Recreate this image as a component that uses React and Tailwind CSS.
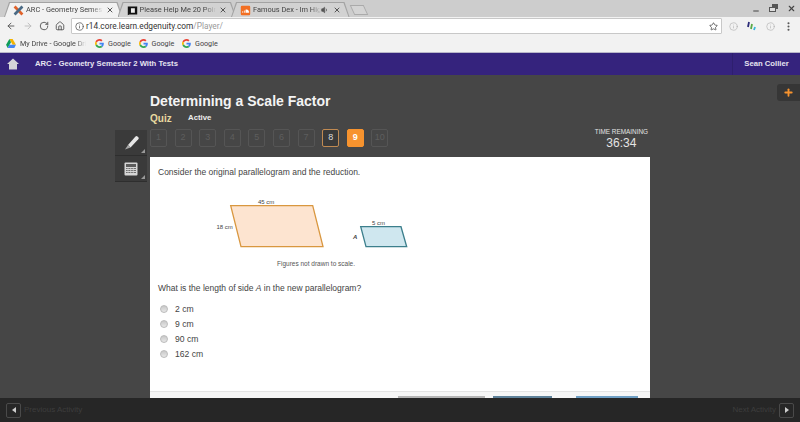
import { ArrowLeft, ArrowRight, RotateCw, Home, Info, Star, X, Minus, EllipsisVertical, Plus, Volume1 } from 'lucide-react';

const sans = { fontFamily: '"Liberation Sans", Arial, sans-serif' };
const chromeFont = { fontFamily: 'Roboto, "Liberation Sans", sans-serif' };

function GoogleG() {
  return (
    <svg width="9" height="9" viewBox="0 0 48 48" className="shrink-0">
      <path fill="#ea4335" d="M24 9.500c3.500 0 6.700 1.200 9.200 3.600l6.800-6.800C35.900 2.400 30.500 0 24 0 14.600 0 6.500 5.400 2.600 13.200l7.900 6.200C12.400 13.700 17.700 9.500 24 9.500z" />
      <path fill="#4285f4" d="M47 24.500c0-1.600-.1-3.100-.4-4.500H24v9h13c-.6 3-2.200 5.500-4.800 7.200l7.700 6C44.400 38 47 31.800 47 24.500z" />
      <path fill="#fbbc05" d="M10.500 28.600c-.5-1.400-.8-3-.8-4.600s.3-3.200.8-4.600l-7.900-6.200C.9 16.500 0 20.100 0 24s.9 7.500 2.600 10.800l7.900-6.200z" />
      <path fill="#34a853" d="M24 48c6.500 0 11.900-2.100 15.900-5.800l-7.700-6c-2.100 1.400-4.900 2.300-8.200 2.300-6.300 0-11.600-4.200-13.500-9.900l-7.900 6.200C6.500 42.600 14.600 48 24 48z" />
    </svg>
  );
}

function TabIcon({ kind }) {
  if (kind === 'x') {
    return (
      <svg width="11" height="11" viewBox="0 0 14 14" className="shrink-0">
        <path d="M2 2l10 10" stroke="#e0622a" strokeWidth="3.500" />
        <path d="M12 2L2 12" stroke="#4a6a85" strokeWidth="3.500" />
      </svg>
    );
  }
  if (kind === 'book') {
    return (
      <svg width="11" height="11" viewBox="0 0 14 14" className="shrink-0">
        <path d="M1 2h12v10H3l-2 1z" fill="#111" />
        <path d="M5 4h5v6H5z" fill="#eee" />
      </svg>
    );
  }
  return (
    <svg width="11" height="11" viewBox="0 0 14 14" className="shrink-0">
      <rect x="1" y="1" width="12" height="12" rx="1.500" fill="#f26f23" />
      <path d="M3 10V8h1v2zm2 0V7h1v3zm2 0V6c2-1 4 0 4 2 1 0 1 2 0 2z" fill="#fff" />
    </svg>
  );
}

function Tab({ icon, title, active, audio }) {
  return (
    <div className="-mr-[5px] h-[15px] w-[118.500px] shrink-0 bg-[#a3a3a3] pl-[1px] pr-[1px] pt-[1px] [clip-path:polygon(0_100%,5px_0,calc(100%-5px)_0,100%_100%)]">
      <div
        className={`flex h-full items-center pl-[8px] pr-[8px] [clip-path:polygon(0_100%,5px_0,calc(100%-5px)_0,100%_100%)] ${
          active ? 'bg-[#f2f2f2]' : 'bg-[#d2d2d2]'
        }`}
      >
        <TabIcon kind={icon} />
        <span className="ml-[2px] min-w-0 flex-1 whitespace-nowrap text-[7.400px] leading-[12px] text-[#444] [mask-image:linear-gradient(to_right,black_85%,transparent)]">
          {title}
        </span>
        {audio && <Volume1 size={8} strokeWidth={2} fill="#555" className="mr-[1px] shrink-0 text-[#555]" />}
        <X size={8} strokeWidth={3} className="ml-[3px] shrink-0 text-[#555]" />
      </div>
    </div>
  );
}

function Bookmark({ label }) {
  return (
    <div className="flex w-[43.500px] shrink-0 items-center gap-[4px]">
      <GoogleG />
      <span className="whitespace-nowrap text-[7.200px] leading-[12px] text-[#444]">{label}</span>
    </div>
  );
}

function BrowserChrome() {
  return (
    <div className="shrink-0" style={chromeFont}>
      <div className="flex h-[17px] items-end justify-between bg-[#cdcdcd] pl-[4px]">
        <div className="flex items-end">
          <Tab icon="x" title="ARC - Geometry Semeste" active />
          <Tab icon="book" title="Please Help Me 20 Point" />
          <Tab icon="cloud" title="Famous Dex - Im High" audio />
          <div className="ml-[7px] mb-[2px] h-[10px] w-[14px] skew-x-[25deg] border border-[#aaa] bg-[#d4d4d4]" />
        </div>
        <div className="flex items-center gap-[9px] self-center pr-[4px] text-[#444]">
          <Minus size={8} strokeWidth={3} className="mt-[4px]" />
          <svg width="9" height="9" viewBox="0 0 9 9">
            <path d="M3 0h6v5H7V8H0V3h3z" fill="#555" />
            <path d="M1 4h5v3H1z" fill="#ddd" />
          </svg>
          <X size={9} strokeWidth={3} />
        </div>
      </div>
      <div className="flex h-[18px] items-center bg-[#f2f2f2] pl-[6px] pr-[6px]">
        <ArrowLeft size={10} strokeWidth={2.200} className="shrink-0 text-[#555]" />
        <ArrowRight size={10} strokeWidth={2.200} className="ml-[7px] shrink-0 text-[#bbb]" />
        <RotateCw size={10} strokeWidth={2.200} className="ml-[6px] shrink-0 text-[#555]" />
        <Home size={10} strokeWidth={2.200} className="ml-[6px] shrink-0 text-[#555]" />
        <div className="ml-[6px] flex h-[16px] flex-1 items-center rounded-[1px] border border-[#c8c8c8] bg-white pl-[3px] pr-[3px]">
          <Info size={9} strokeWidth={2} className="text-[#555]" />
          <span className="ml-[2px] text-[8.300px] leading-none text-[#333]">
            r14.core.learn.edgenuity.com<span className="text-[#999]">/Player/</span>
          </span>
          <Star size={9} strokeWidth={2} className="ml-auto text-[#444]" />
        </div>
        <Info size={9} strokeWidth={1.500} className="ml-[7px] text-[#aaa]" />
        <svg width="10" height="10" viewBox="0 0 10 10" className="ml-[9px]">
          <path d="M2 1L1 6" stroke="#2b2b78" strokeWidth="1.800" />
          <path d="M5 3L4 8" stroke="#5aa845" strokeWidth="1.800" />
          <path d="M8 6L7 9" stroke="#38b6d8" strokeWidth="1.800" />
        </svg>
        <Info size={9} strokeWidth={1.500} className="ml-[9px] text-[#aaa]" />
        <EllipsisVertical size={11} strokeWidth={2.500} className="ml-[8px] text-[#555]" />
      </div>
      <div className="flex h-[17px] items-center bg-[#f2f2f2] pl-[6px]">
        <svg width="10" height="9" viewBox="0 0 11 10" className="shrink-0">
          <path d="M3.700 0h3.600L11 6.500H7.300z" fill="#f4b400" />
          <path d="M3.700 0L0 6.500 1.800 10l3.700-6.500z" fill="#0f9d58" />
          <path d="M1.800 10h7.400L11 6.500H3.600z" fill="#4285f4" />
        </svg>
        <span className="ml-[4px] w-[66px] whitespace-nowrap text-[7.200px] leading-[12px] text-[#444] [mask-image:linear-gradient(to_right,black_85%,transparent)]">
          My Drive - Google Dri
        </span>
        <div className="ml-[9px] flex">
          <Bookmark label="Google" />
          <Bookmark label="Google" />
          <Bookmark label="Google" />
        </div>
      </div>
      <div className="h-[1px] bg-[#b9b7c9]" />
    </div>
  );
}

function HeaderBar() {
  return (
    <div className="flex h-[22px] shrink-0 items-center bg-[#35237d] text-white">
      <div className="flex w-[35px] justify-center">
        <svg width="12" height="12" viewBox="0 0 12 12" className="mr-[10px]">
          <path d="M6 .5L0 6h2v5.500h8V6h2z" fill="#d4d4d8" />
        </svg>
      </div>
      <span className="text-[7.700px] font-bold text-[#e6e4f0]">ARC - Geometry Semester 2 With Tests</span>
      <div className="ml-auto flex h-full w-[68px] items-center justify-center border-l border-[#2e1f6e] text-[7.700px] font-bold text-[#e6e4f0]">
        Sean Collier
      </div>
    </div>
  );
}

function NumberBox({ n }) {
  const base = 'flex h-[18px] w-[17px] items-center justify-center rounded-[2px] border text-[9px]';
  if (n === 8) return <div className={`${base} border-[#c08a52] bg-[#3a3a3a] text-[#ddd]`}>{n}</div>;
  if (n === 9) return <div className={`${base} border-[#f7932e] bg-[#f7932e] font-bold text-white`}>{n}</div>;
  return <div className={`${base} border-[#555] text-[#5e5e5e]`}>{n}</div>;
}

function Tool({ children }) {
  return (
    <div className="relative flex h-[26px] w-[32px] items-center justify-center border-b border-[#2e2e2e] bg-[#3a3a3a]">
      {children}
      <span className="absolute bottom-[2px] right-[2px] h-0 w-0 border-b-[4px] border-l-[4px] border-b-[#999] border-l-transparent" />
    </div>
  );
}

function Figure() {
  return (
    <svg width="230" height="70" viewBox="0 0 230 70" className="ml-[50px] mt-[11px] block">
      <path d="M22.700 16.700h82L115 57.700H33z" fill="#fde4d0" stroke="#d9973f" strokeWidth="1.300" />
      <path d="M152.700 37.700H193l5.700 20H158z" fill="#cfe7ef" stroke="#3c7f8c" strokeWidth="1.300" />
      <text x="50" y="15" fontSize="6" fill="#444">45 cm</text>
      <text x="8.500" y="40" fontSize="6" fill="#444">18 cm</text>
      <text x="164" y="35.500" fontSize="6" fill="#444">5 cm</text>
      <text x="145" y="49.500" fontSize="6" fontStyle="italic" fontWeight="bold" fill="#444">A</text>
    </svg>
  );
}

function Option({ label }) {
  return (
    <div className="flex h-[15px] items-center">
      <span className="-mt-[2px] ml-[10px] h-[8px] w-[8px] rounded-full border border-[#bbb] bg-gradient-to-b from-[#c8c8c8] to-[#e8e8e8]" />
      <span className="ml-[7px] text-[8.600px] text-[#444]">{label}</span>
    </div>
  );
}

export default function App() {
  return (
    <div className="flex h-[422px] w-[800px] flex-col overflow-hidden bg-[#464646]" style={sans}>
      <BrowserChrome />
      <HeaderBar />
      <div className="relative flex min-h-0 flex-1">
        <div className="absolute right-0 top-[9px] flex h-[17px] w-[23px] items-center justify-center rounded-l-[3px] bg-[#363636]">
          <Plus size={11} strokeWidth={4} className="text-[#f7932e]" />
        </div>
        <div className="ml-[115px] mt-[55px] flex h-fit w-[35px] flex-col">
          <Tool>
            <svg width="15" height="15" viewBox="0 0 15 15">
              <path d="M4 10l7.500-8.500a1.500 1.500 0 0 1 2 0l.8.8a1.500 1.500 0 0 1 0 2L6.500 12.500z" fill="#e6e6e6" />
              <path d="M4 10l2.500 2.500L1 14.500z" fill="#a8a8a8" />
            </svg>
          </Tool>
          <Tool>
            <svg width="14" height="14" viewBox="0 0 14 14">
              <rect x="0.500" y="0.500" width="13" height="13" rx="1" fill="#d6d6d6" />
              <rect x="2" y="2" width="10" height="3" fill="#5c5c5c" />
              <path d="M2 6.500h10M2 8.500h10M2 10.500h10" stroke="#6e6e6e" strokeWidth="1" />
              <path d="M4 6v6M6.700 6v6M9.300 6v6" stroke="#d6d6d6" strokeWidth="0.700" />
            </svg>
          </Tool>
        </div>
        <div className="flex w-[500px] flex-col">
          <div className="h-[82px] shrink-0">
            <h1 className="mt-[18px] text-[14px] font-bold leading-[17px] text-[#f4f4f4]">Determining a Scale Factor</h1>
            <div className="mt-[1px] flex h-[14px] items-center">
              <span className="w-[38px] text-[10px] font-bold text-[#e8d9a0]">Quiz</span>
              <span className="text-[7.800px] font-bold text-[#eee]">Active</span>
            </div>
            <div className="mt-[4px] flex items-start">
              <div className="flex gap-[7.600px]">
                {[1, 2, 3, 4, 5, 6, 7, 8, 9, 10].map((n) => (
                  <NumberBox key={n} n={n} />
                ))}
              </div>
              <div className="ml-auto mr-[2px] mt-[-1px] flex flex-col items-center text-[#e4e4e4]">
                <span className="text-[6.400px] leading-[8px]">TIME REMAINING</span>
                <span className="text-[12px] leading-[14px]">36:34</span>
              </div>
            </div>
          </div>
          <div className="flex min-h-0 flex-1 flex-col bg-white">
            <div className="flex-1 pl-[8px]">
              <p className="pt-[9px] text-[8.500px] leading-[12px] text-[#444]">Consider the original parallelogram and the reduction.</p>
              <Figure />
              <p className="ml-[119px] text-[6.500px] leading-[10px] text-[#555]">Figures not drawn to scale.</p>
              <p className="mt-[13px] text-[8.500px] leading-[12px] text-[#444]">
                What is the length of side <i>A</i> in the new parallelogram?
              </p>
              <div className="-ml-[8px] mt-[8px]">
                <Option label="2 cm" />
                <Option label="9 cm" />
                <Option label="90 cm" />
                <Option label="162 cm" />
              </div>
            </div>
            <div className="relative h-[7px] border-t border-[#e4e4e4] bg-[#f6f6f6]">
              <div className="absolute bottom-0 left-[248px] h-[2px] w-[87px] bg-[#b5b5b5]" />
              <div className="absolute bottom-0 left-[343px] h-[2px] w-[59px] bg-[#5e8199]" />
              <div className="absolute bottom-0 left-[426px] h-[2px] w-[62px] bg-[#6f9fc4]" />
            </div>
          </div>
        </div>
      </div>
      <div className="flex h-[24px] shrink-0 items-center justify-between bg-[#262626] px-[6px] text-[8px] text-[#3d3d3d]">
        <div className="flex items-center gap-[3px]">
          <div className="flex h-[15px] w-[15px] items-center justify-center rounded-[2px] border border-[#4a4a4a]">
            <span className="h-0 w-0 border-y-[3px] border-r-[4px] border-y-transparent border-r-[#ccc]" />
          </div>
          <span>Previous Activity</span>
        </div>
        <div className="flex items-center gap-[3px]">
          <span>Next Activity</span>
          <div className="flex h-[15px] w-[15px] items-center justify-center rounded-[2px] border border-[#4a4a4a]">
            <span className="h-0 w-0 border-y-[3px] border-l-[4px] border-y-transparent border-l-[#ccc]" />
          </div>
        </div>
      </div>
    </div>
  );
}
